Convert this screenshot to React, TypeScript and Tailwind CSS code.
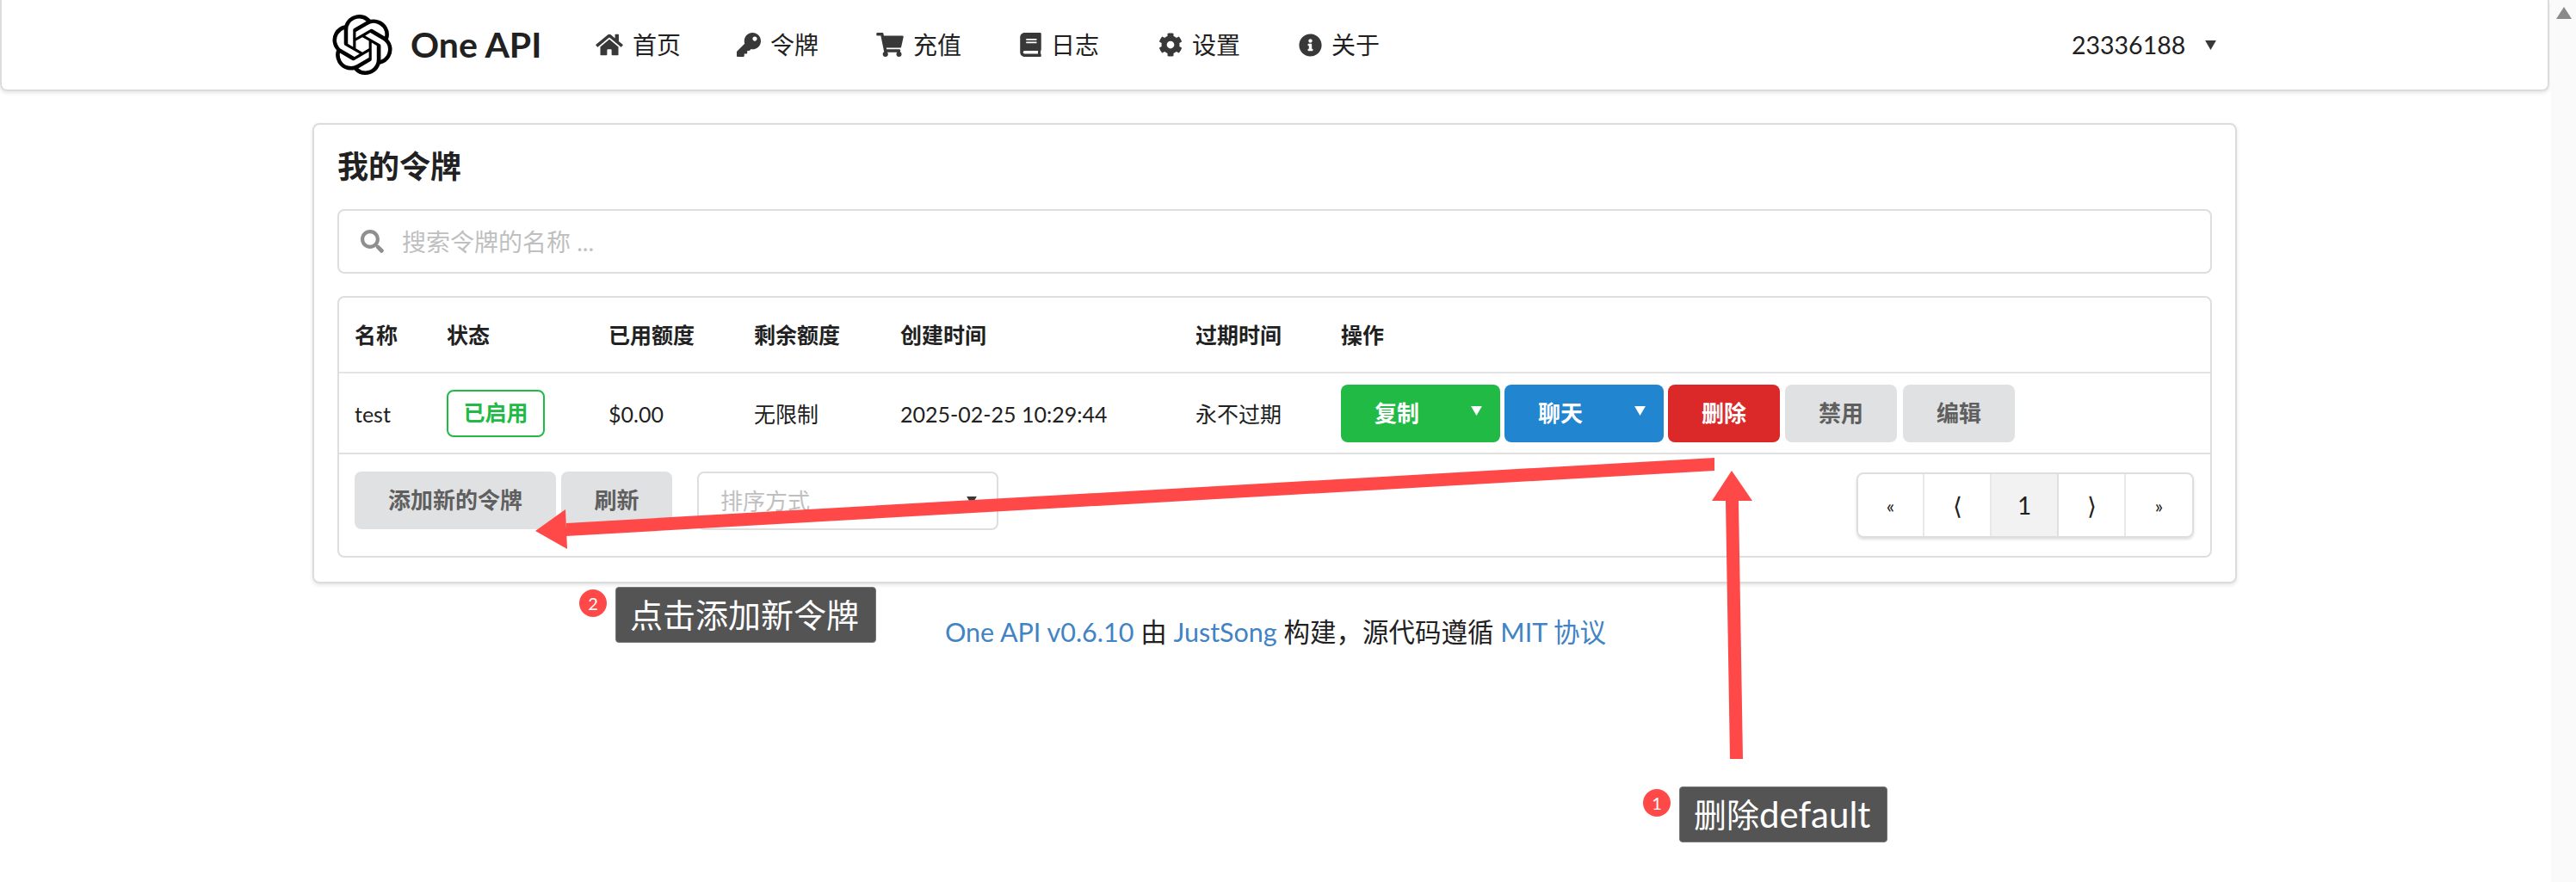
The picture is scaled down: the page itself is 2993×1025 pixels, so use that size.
import React from "react";
import { FaBook, FaCog, FaHome, FaInfoCircle, FaKey, FaSearch, FaShoppingCart } from "react-icons/fa";
import { SiOpenai } from "react-icons/si";

const navItems = [
  { label: "首页", icon: FaHome, className: "w-[164px]", iconClass: "w-[32px] h-[28px]" },
  { label: "令牌", icon: FaKey, className: "w-[162px]", iconClass: "w-[28px] h-[28px]" },
  { label: "充值", icon: FaShoppingCart, className: "w-[167px]", iconClass: "w-[32px] h-[28px]" },
  { label: "日志", icon: FaBook, className: "w-[161px]", iconClass: "w-[25px] h-[28px]" },
  { label: "设置", icon: FaCog, className: "w-[163px]", iconClass: "w-[28px] h-[28px]" },
  { label: "关于", icon: FaInfoCircle, className: "w-[100px]", iconClass: "w-[27px] h-[27px]" },
];

const headers = ["名称", "状态", "已用额度", "剩余额度", "创建时间", "过期时间", "操作"];

const Caret: React.FC<{ className?: string }> = ({ className }) => (
  <svg viewBox="0 0 14 12" className={className} fill="currentColor">
    <polygon points="0,0 14,0 7,12" />
  </svg>
);

const SplitButton: React.FC<{ label: string; color: string }> = ({ label, color }) => (
  <div className={`flex h-[67px] w-[185px] items-center rounded-[8px] pl-[39px] pr-[21px] text-[26px] font-bold text-white ${color}`}>
    <span>{label}</span>
    <Caret className="ml-auto mb-[5px] h-[11px] w-[13px]" />
  </div>
);

const GrayButton: React.FC<{ label: string; className?: string }> = ({ label, className }) => (
  <div className={`flex h-[67px] items-center justify-center rounded-[8px] bg-[#e0e1e2] text-[26px] font-bold text-[#5f5f5f] ${className ?? ""}`}>
    {label}
  </div>
);

const Annotation: React.FC<{ num: number; className: string; children: React.ReactNode }> = ({ num, className, children }) => (
  <div className={`absolute flex items-start gap-[10px] ${className}`}>
    <div className="mt-[3px] flex h-[32px] w-[32px] items-center justify-center rounded-full bg-[#ff4949] text-[20px] text-white">
      {num}
    </div>
    <div className="flex h-[65px] items-center rounded-[4px] border border-[#777] bg-[#545454] pl-[16px] pr-[19px] text-[38px] text-white">
      {children}
    </div>
  </div>
);

export default function App() {
  return (
    <div className="relative flex h-[1025px] w-[2993px] overflow-hidden bg-white font-[Lato,'Noto_Sans_CJK_SC',sans-serif] text-[28px] text-[#212121]">
      <div className="w-[2964px] shrink-0">
        {/* top menu */}
        <div className="flex h-[106px] w-[2962px] items-center rounded-b-[8px] border-x-2 border-b-2 border-[#dcdcdc] pl-[384px] shadow-[0_2px_4px_rgba(34,36,38,0.12)]">
          <SiOpenai className="h-[70px] w-[70px] text-black" />
          <span className="ml-[21px] w-[215px] text-[41px] font-bold">One API</span>
          {navItems.map((item) => (
            <div key={item.label} className={`flex items-center ${item.className}`}>
              <item.icon className={`${item.iconClass} text-[#383838]`} />
              <span className="ml-[11px]">{item.label}</span>
            </div>
          ))}
          <span className="ml-[798px] text-[28.5px]">23336188</span>
          <Caret className="ml-[22px] h-[11px] w-[15px] text-[#383838]" />
        </div>

        {/* tokens card */}
        <div className="ml-[363px] mt-[37px] h-[535px] w-[2236px] rounded-[8px] border-2 border-[#dcdcdc] px-[27px] pt-[26px] shadow-[0_2px_4px_rgba(34,36,38,0.12)]">
          <h2 className="h-[72px] text-[36px] font-bold leading-[44px]">我的令牌</h2>
          <div className="flex h-[75px] w-[2178px] items-center rounded-[8px] border-2 border-[#dedede] pl-[25px]">
            <FaSearch className="h-[27px] w-[27px] text-[#8f8f8f]" />
            <span className="ml-[21px] text-[#bfbfbf]">搜索令牌的名称 ...</span>
          </div>

          <div className="mt-[26px] h-[304px] w-[2178px] rounded-[8px] border-2 border-[#dedede] text-[25px]">
            <div className="grid h-[88px] grid-cols-[107px_188px_169px_170px_343px_169px_1fr] items-center border-b-2 border-[#e4e4e4] pl-[18px] pt-[2px] font-bold">
              {headers.map((h) => (
                <div key={h}>{h}</div>
              ))}
            </div>
            <div className="grid h-[94px] grid-cols-[107px_188px_169px_170px_343px_169px_1fr] items-center border-b-2 border-[#e0e0e0] pl-[18px]">
              <div className="pt-[3px]">test</div>
              <div>
                <span className="flex h-[55px] w-[114px] items-center justify-center rounded-[8px] border-2 border-[#21ba45] font-bold text-[#21ba45]">
                  已启用
                </span>
              </div>
              <div className="pt-[3px]">$0.00</div>
              <div className="pt-[3px]">无限制</div>
              <div className="pt-[3px]">2025-02-25 10:29:44</div>
              <div className="pt-[3px]">永不过期</div>
              <div className="flex gap-[5px]">
                <SplitButton label="复制" color="bg-[#21ba45]" />
                <SplitButton label="聊天" color="bg-[#2185d0]" />
                <div className="flex h-[67px] w-[130px] items-center justify-center rounded-[8px] bg-[#db2828] text-[26px] font-bold text-white">
                  删除
                </div>
                <GrayButton label="禁用" className="ml-[1px] w-[130px]" />
                <GrayButton label="编辑" className="ml-[2px] w-[130px]" />
              </div>
            </div>
            <div className="flex items-start pl-[18px] pt-[20px]">
              <GrayButton label="添加新的令牌" className="w-[234px]" />
              <GrayButton label="刷新" className="ml-[6px] w-[129px]" />
              <div className="ml-[29px] flex h-[68px] w-[350px] items-center justify-between rounded-[8px] border-2 border-[#dedede] pl-[25px] pr-[22px] text-[26px] text-[#bfbfbf]">
                <span>排序方式</span>
                <Caret className="h-[10px] w-[14px] text-[#383838]" />
              </div>
              <div className="ml-[997px] mt-[1px] flex h-[76px] w-[392px] rounded-[8px] border-2 border-[#dedede] text-[28px] shadow-[0_2px_3px_rgba(34,36,38,0.15)]">
                <div className="flex w-[77px] items-center justify-center border-r-2 border-[#e8e8e8] text-[22px]">«</div>
                <div className="flex w-[78px] items-center justify-center border-r-2 border-[#e8e8e8]">⟨</div>
                <div className="flex w-[78px] items-center justify-center border-r-2 border-[#e0e0e0] bg-[#f2f2f2]">1</div>
                <div className="flex w-[78px] items-center justify-center border-r-2 border-[#e8e8e8]">⟩</div>
                <div className="flex flex-1 items-center justify-center text-[22px]">»</div>
              </div>
            </div>
          </div>
        </div>

        <div className="mt-[36px] text-center text-[30.5px] leading-[40px]">
          <span className="text-[#4183c4]">One API v0.6.10</span> 由 <span className="text-[#4183c4]">JustSong</span> 构建，源代码遵循 <span className="text-[#4183c4]">MIT 协议</span>
        </div>
      </div>

      {/* scrollbar */}
      <div className="flex flex-1 justify-center bg-[#fafafa] pt-[8px]">
        <svg viewBox="0 0 18 14" className="h-[14px] w-[18px] text-[#8a8a8a]" fill="currentColor">
          <polygon points="9,0 18,14 0,14" />
        </svg>
      </div>

      {/* screenshot annotations */}
      <svg className="pointer-events-none absolute inset-0 h-[1025px] w-[2993px]" viewBox="0 0 2993 1025">
        <polygon fill="#ff4949" points="1992,532 1992,547 658,623 658,608" />
        <polygon fill="#ff4949" points="622,617 657,592 659,638" />
        <polygon fill="#ff4949" points="2005,582 2020,582 2025,882 2010,882" />
        <polygon fill="#ff4949" points="2012,547 1989,582 2036,582" />
      </svg>
      <Annotation num={2} className="left-[673px] top-[682px]">点击添加新令牌</Annotation>
      <Annotation num={1} className="left-[1909px] top-[914px]">
        <span>删除</span>
        <span className="text-[42px]">default</span>
      </Annotation>
    </div>
  );
}
